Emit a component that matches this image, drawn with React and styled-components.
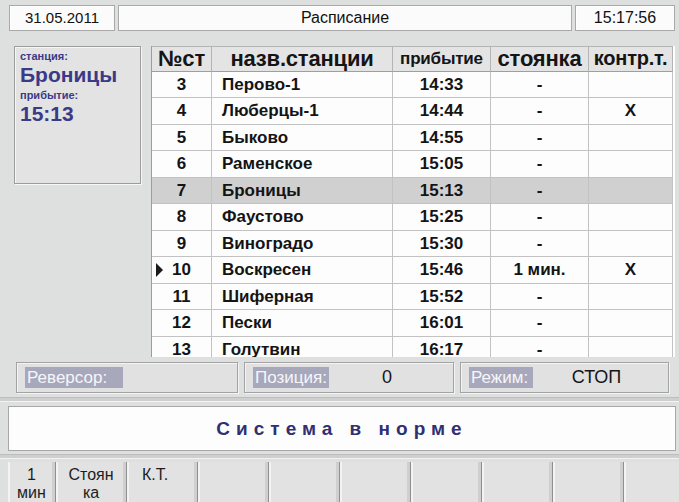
import React from 'react'
import styled, { createGlobalStyle } from 'styled-components'

const GlobalStyle = createGlobalStyle`
  html, body {
    margin: 0;
    padding: 0;
    background: #dedfdf;
  }
  body {
    font-family: "Liberation Sans", Arial, sans-serif;
    color: #111;
  }
`

const rows = [
  { n: 3, name: 'Перово-1', time: '14:33', stop: '-', kt: '' },
  { n: 4, name: 'Люберцы-1', time: '14:44', stop: '-', kt: 'X' },
  { n: 5, name: 'Быково', time: '14:55', stop: '-', kt: '' },
  { n: 6, name: 'Раменское', time: '15:05', stop: '-', kt: '' },
  { n: 7, name: 'Броницы', time: '15:13', stop: '-', kt: '', selected: true },
  { n: 8, name: 'Фаустово', time: '15:25', stop: '-', kt: '' },
  { n: 9, name: 'Виноградо', time: '15:30', stop: '-', kt: '' },
  { n: 10, name: 'Воскресен', time: '15:46', stop: '1 мин.', kt: 'X', current: true },
  { n: 11, name: 'Шиферная', time: '15:52', stop: '-', kt: '' },
  { n: 12, name: 'Пески', time: '16:01', stop: '-', kt: '' },
  { n: 13, name: 'Голутвин', time: '16:17', stop: '-', kt: '' }
]

const keys = [['1', 'мин'], ['Стоян', 'ка'], ['К.Т.'], [], [], [], [], [], [], []]

const Screen = styled.div`
  width: 679px;
  height: 502px;
  overflow: hidden;
  display: flex;
  flex-direction: column;
  background: #dedfdf;
`

// Top line: date / title / clock
const TopBar = styled.div`
  display: flex;
  gap: 3px;
  height: 26px;
  margin: 5px 4px 0 9px;
`

const TopBox = styled.div`
  width: ${p => p.width || 'auto'};
  flex: ${p => (p.width ? 'none' : 1)};
  background: #fbfbfb;
  border: 1px solid #a9a9a9;
  box-shadow: inset 1px 1px 0 #fff;
  display: flex;
  align-items: center;
  justify-content: center;
  font-size: ${p => p.size || 16}px;
  color: #111;
`

const Main = styled.div`
  display: flex;
  margin-top: 15px;
  height: 311px;
`

const SidePanel = styled.div`
  width: 127px;
  height: 138px;
  margin-left: 14px;
  padding: 3px 0 0 5px;
  box-sizing: border-box;
  border: 1px solid #9c9c9c;
  box-shadow: inset 1px 1px 0 #f7f7f7, 1px 1px 0 #f7f7f7;
  background: #e3e3e3;
  display: flex;
  flex-direction: column;
`

const SideLabel = styled.div`
  font-size: 11px;
  font-weight: bold;
  color: #3a3a86;
  line-height: 13px;
`

const SideValue = styled.div`
  font-size: 21px;
  font-weight: bold;
  color: #3a3a86;
  line-height: 23px;
  margin-bottom: 3px;
`

const TableFrame = styled.div`
  margin-left: 10px;
  width: 523px;
  height: 311px;
  overflow: hidden;
  border-left: 1px solid #9c9c9c;
  background: #fdfdfd;
`

const Grid = styled.div`
  display: grid;
  grid-template-columns: 60px 181px 98px 98px 84px;
  grid-auto-rows: 26.5px;
  grid-template-rows: 26px;
`

const HeadCell = styled.div`
  display: flex;
  align-items: center;
  justify-content: center;
  background: #e4e4e4;
  border-right: 1px solid #b4b4b4;
  border-bottom: 1px solid #9f9f9f;
  border-top: 1px solid #b4b4b4;
  font-weight: bold;
  font-size: ${p => p.size || 22}px;
  color: #151515;
  white-space: nowrap;
  letter-spacing: -0.2px;
`

const Cell = styled.div`
  position: relative;
  display: flex;
  align-items: center;
  justify-content: ${p => (p.left ? 'flex-start' : 'center')};
  padding-left: ${p => (p.left ? '10px' : '0')};
  background: ${p => (p.selected ? '#d0d0d0' : '#fdfdfd')};
  border-right: 1px solid #c2c2c2;
  border-bottom: 1px solid #c2c2c2;
  font-weight: bold;
  font-size: 17px;
  color: #141414;
  white-space: nowrap;
`

const Marker = styled.span`
  position: absolute;
  left: 4px;
  top: 50%;
  margin-top: -7px;
  width: 0;
  height: 0;
  border-top: 7px solid transparent;
  border-bottom: 7px solid transparent;
  border-left: 7px solid #1a1a1a;
`

// Reverser / position / mode indicators
const StatusBar = styled.div`
  display: flex;
  gap: 6px;
  height: 32px;
  margin: 5px 0 0 16px;
  width: 653px;
`

const StatusBox = styled.div`
  width: ${p => p.width}px;
  box-sizing: border-box;
  border: 1px solid #a3a3a3;
  box-shadow: inset 1px 1px 0 #f4f4f4, 1px 1px 0 #f4f4f4;
  background: #e1e1e1;
  display: flex;
  align-items: center;
  padding: 0 8px;
`

const StatusLabel = styled.span`
  background: #a8a8bc;
  color: #f6f6fa;
  font-size: 17px;
  line-height: 21px;
  padding: 0 2px;
  width: ${p => p.width}px;
  box-sizing: border-box;
  white-space: nowrap;
`

const StatusValue = styled.span`
  flex: 1;
  text-align: center;
  font-size: 18px;
  color: #151515;
`

const Groove = styled.div`
  height: 3px;
  margin-top: ${p => p.top}px;
  border-top: 1px solid #bdbdbd;
  border-bottom: 1px solid #f3f3f3;
  background: #cfcfcf;
`

const Message = styled.div`
  margin: 4px 3px 0 8px;
  height: 45px;
  box-sizing: border-box;
  background: #fdfdfd;
  border: 1px solid #a7a7a7;
  display: flex;
  align-items: center;
  justify-content: center;
  font-size: 19px;
  font-weight: bold;
  letter-spacing: 6px;
  color: #2f2f72;
`

const Keys = styled.div`
  display: flex;
  margin: 3px 0 0 8px;
  flex: 1;
`

const Key = styled.div`
  width: ${p => (p.narrow ? 48 : 71)}px;
  flex: none;
  box-sizing: border-box;
  border-right: 1px solid #8f8f8f;
  box-shadow: inset 2px 0 0 #f3f3f3, inset -3px 0 0 #cfcfcf;
  background: #e2e2e2;
  display: flex;
  flex-direction: column;
  align-items: center;
  padding-top: 4px;
  padding-right: ${p => p.shift || 0}px;
  font-size: 16px;
  line-height: 18px;
  color: #1d1d1d;
`

export default function App() {
  return (
    <>
      <GlobalStyle />
      <Screen>
        <TopBar>
          <TopBox width="104px" size={15}>31.05.2011</TopBox>
          <TopBox>Расписание</TopBox>
          <TopBox width="98px">15:17:56</TopBox>
        </TopBar>

        <Main>
          <SidePanel>
            <SideLabel>станция:</SideLabel>
            <SideValue>Броницы</SideValue>
            <SideLabel>прибытие:</SideLabel>
            <SideValue>15:13</SideValue>
          </SidePanel>

          <TableFrame>
            <Grid>
              <HeadCell>№ст</HeadCell>
              <HeadCell>назв.станции</HeadCell>
              <HeadCell size={17}>прибытие</HeadCell>
              <HeadCell>стоянка</HeadCell>
              <HeadCell size={20}>контр.т.</HeadCell>
              {rows.map(r => (
                <React.Fragment key={r.n}>
                  <Cell selected={r.selected}>
                    {r.current && <Marker />}
                    {r.n}
                  </Cell>
                  <Cell left selected={r.selected}>{r.name}</Cell>
                  <Cell selected={r.selected}>{r.time}</Cell>
                  <Cell selected={r.selected}>{r.stop}</Cell>
                  <Cell selected={r.selected}>{r.kt}</Cell>
                </React.Fragment>
              ))}
            </Grid>
          </TableFrame>
        </Main>

        <StatusBar>
          <StatusBox width={222}>
            <StatusLabel width={98}>Реверсор:</StatusLabel>
          </StatusBox>
          <StatusBox width={210}>
            <StatusLabel width={76}>Позиция:</StatusLabel>
            <StatusValue>0</StatusValue>
          </StatusBox>
          <StatusBox width={209}>
            <StatusLabel width={64}>Режим:</StatusLabel>
            <StatusValue>СТОП</StatusValue>
          </StatusBox>
        </StatusBar>

        <Groove top={4} />
        <Message>Система в норме</Message>
        <Groove top={3} />

        <Keys>
          {keys.map((k, i) => (
            <Key key={i} narrow={i === 0} shift={i === 2 ? 14 : 0}>
              {k.map(line => (
                <span key={line}>{line}</span>
              ))}
            </Key>
          ))}
        </Keys>
      </Screen>
    </>
  )
}
